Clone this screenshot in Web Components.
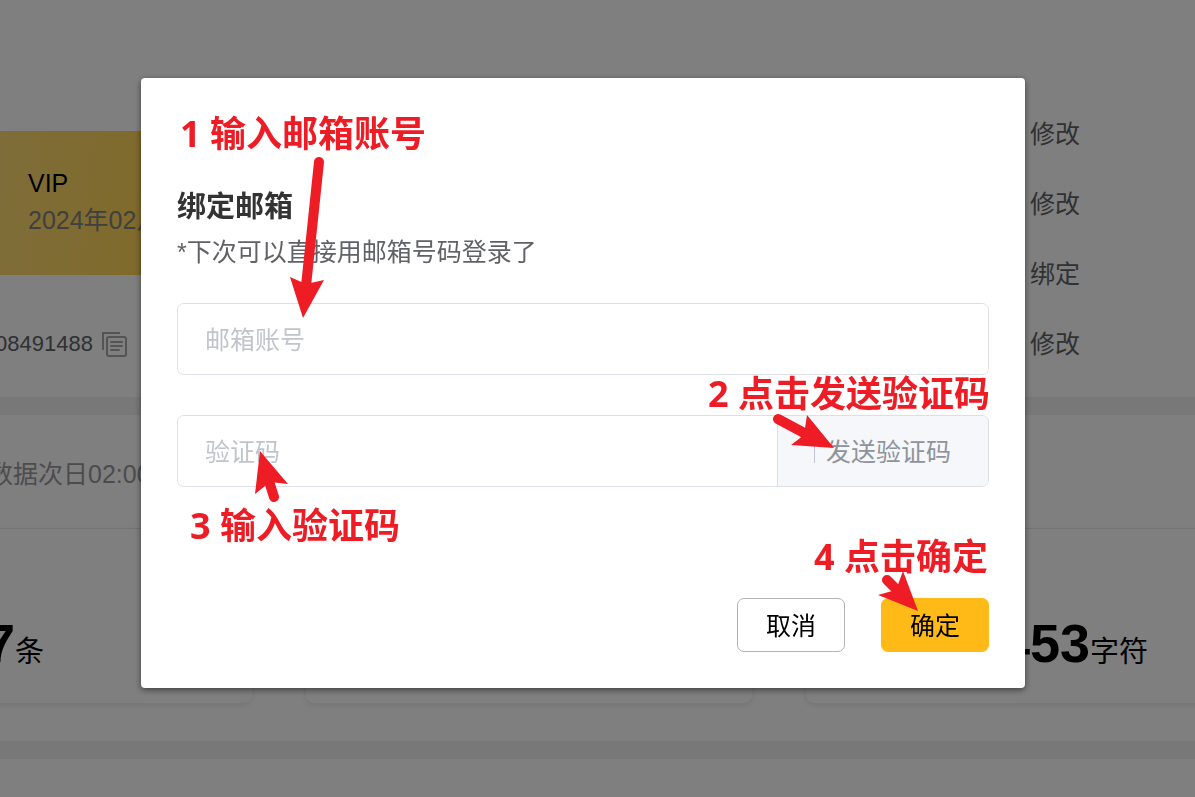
<!DOCTYPE html>
<html lang="zh-CN">
<head>
<meta charset="utf-8">
<title>绑定邮箱</title>
<style>
html, body { height: 100%; margin: 0; }
body {
  font-family: "Liberation Sans", "Noto Sans CJK SC", sans-serif;
  font-size: 25px;
  color: #606266;
  background: #fff;
  overflow: hidden;
}
</style>
</head>
<body>
<account-page></account-page>
<modal-overlay>
  <bind-email-dialog></bind-email-dialog>
</modal-overlay>
<guide-layer></guide-layer>

<script>
function define(name, html) {
  const template = document.createElement('template');
  template.innerHTML = html;
  customElements.define(name, class extends HTMLElement {
    constructor() {
      super();
      this.attachShadow({ mode: 'open' }).append(template.content.cloneNode(true));
    }
  });
}

define('vip-card', `
<style>
:host { display: flex; flex-direction: column; justify-content: center; box-sizing: border-box; height: 144px; width: 640px; padding: 0 0 2px 276px; line-height: 37px;
  background: linear-gradient(95deg, #ffdc78 35%, #ffd65a 58%, #ffd048 100%); color: #808080; }
b { font-weight: 400; color: #000; }
</style>
<b>VIP</b><span><slot></slot></span>`);

define('copy-button', `
<style>
:host { display: inline-flex; }
button { display: flex; padding: 0; border: 0; background: none; color: #a8a8a8; }
</style>
<button type="button" aria-label="复制">
<svg width="25" height="25" viewBox="0 0 25 25" fill="none" stroke="currentColor" stroke-width="2">
<path d="M1 18V1h17"/><rect x="5" y="5" width="19" height="19" rx="2"/>
<path d="M9 10h11M9 14h11M9 18h8" stroke-linecap="round"/></svg>
</button>`);

define('action-list', `
<style>
:host { display: flex; flex-direction: column; line-height: 30px; gap: 40px; }
a { color: inherit; text-decoration: none; }
</style>
<a href="#name">修改</a><a href="#password">修改</a><a href="#email">绑定</a><a href="#phone">修改</a>`);

define('stat-card', `
<style>
:host { display: flex; align-items: flex-end; box-sizing: border-box; height: 174px; padding: 0 0 22px var(--inset, 179px);
  border-radius: 0 0 8px 8px; box-shadow: 0 2px 6px rgba(0,0,0,.1); color: #000; font-size: 29px; white-space: nowrap; }
p { margin: 0; line-height: 58px; }
strong { font-size: 54px; }
</style>
<p><strong><slot name="value"></slot></strong><slot></slot></p>`);

define('account-page', `
<style>
:host { display: block; height: 100%; overflow: hidden; background: #f0f0f0; }
main { display: flex; flex-direction: column; gap: 18px; margin: 0 -111px 0 -248px; min-height: 100%; }
section { background: #fff; }
.profile { display: flex; justify-content: space-between; box-sizing: border-box; height: 397px; }
.left { padding-top: 131px; }
.id { display: flex; align-items: center; gap: 9px; padding: 56px 0 0 243px; font-size: 22px; line-height: 26px; }
action-list { padding: 119px 226px 0 0; }
.stats { height: 326px; }
header { box-sizing: border-box; height: 114px; padding: 41px 0 0 236px; line-height: 36px; color: #999; border-bottom: 1px solid #ebebeb; }
.cards { display: grid; grid-template-columns: repeat(3, 1fr); gap: 54px; padding: 0 54px; }
.last { --inset: 194px; }
.more { flex: 1; }
</style>
<main>
  <section class="profile">
    <div class="left">
      <vip-card>2024年02月</vip-card>
      <div class="id"><span>08491488</span><copy-button></copy-button></div>
    </div>
    <action-list></action-list>
  </section>
  <section class="stats">
    <header>数据次日02:00</header>
    <div class="cards">
      <stat-card><span slot="value">7</span>条</stat-card>
      <stat-card></stat-card>
      <stat-card class="last"><span slot="value">453</span>字符</stat-card>
    </div>
  </section>
  <section class="more"></section>
</main>`);

define('modal-overlay', `
<style>
:host { position: fixed; inset: 0; display: flex; justify-content: center; align-items: flex-start; padding: 78px 29px 0 0; background: rgba(0,0,0,.5); }
</style>
<slot></slot>`);

define('text-field', `
<style>
:host { display: flex; height: 72px; box-sizing: border-box; border: 1px solid #dcdfe6; border-radius: 7px; overflow: hidden; }
label { display: flex; flex: 1; }
input { flex: 1; min-width: 0; padding: 2px 27px 0; border: 0; outline: 0; background: #fff; font: inherit; color: #606266; }
input::placeholder { color: #c0c4cc; opacity: 1; }
</style>
<label><input type="text"></label><slot></slot>`);
customElements.define('labelled-field', class extends customElements.get('text-field') {
  constructor() {
    super();
    const input = this.shadowRoot.querySelector('input');
    input.placeholder = this.getAttribute('label') || '';
    input.setAttribute('aria-label', input.placeholder);
  }
});

define('send-code', `
<style>
:host { display: flex; }
button { display: flex; align-items: center; gap: 11px; padding: 0 37px 3px 36px; border: 0; border-left: 1px solid #dcdfe6; background: #f5f7fa; color: #909399; font: inherit; }
i { width: 1px; height: 27px; background: #c0c4cc; }
</style>
<button type="button"><i></i>发送验证码</button>`);

define('action-button', `
<style>
:host { display: block; }
button { width: 108px; height: 54px; padding: 0 0 2px; border: 1px solid #b3b3b3; border-radius: 7px; background: #fff; color: #000; font: inherit; }
:host([primary]) button { border-color: #ffba17; background: #ffba17; }
</style>
<button type="button"><slot></slot></button>`);

define('bind-email-dialog', `
<style>
:host { display: block; box-sizing: border-box; width: 884px; max-width: 100%; height: 610px; padding: 109px 36px 36px; border-radius: 4px; background: #fff; box-shadow: 0 2px 6px rgba(0,0,0,.5); }
h2 { margin: 0; font-size: 29px; line-height: 40px; color: #333; }
p { margin: 6px 0 31px; line-height: 39px; }
form { display: flex; flex-direction: column; gap: 40px; }
footer { display: flex; justify-content: flex-end; gap: 36px; margin-top: 71px; }
</style>
<h2>绑定邮箱</h2>
<p>*下次可以直接用邮箱号码登录了</p>
<form>
  <labelled-field label="邮箱账号"></labelled-field>
  <labelled-field label="验证码"><send-code></send-code></labelled-field>
  <footer><action-button>取消</action-button><action-button primary>确定</action-button></footer>
</form>`);

define('guide-layer', `
<style>
:host { position: fixed; inset: 0; display: flex; justify-content: center; align-items: flex-start; padding: 78px 29px 0 0; pointer-events: none; color: #ee1c25; font: bold 36px/48px "Open Sans", "Noto Sans CJK SC", sans-serif; }
div { position: relative; width: 884px; height: 610px; }
svg { position: absolute; inset: 0; overflow: visible; fill: currentColor; stroke: currentColor; }
span { position: absolute; white-space: nowrap; }
.one { left: 39px; top: 32px; }
.two { right: 35px; top: 292px; }
.three { left: 49px; top: 424px; }
.four { right: 37px; top: 455px; }
</style>
<div>
  <svg width="884" height="610" viewBox="141 78 884 610" aria-hidden="true">
    <g stroke-width="10" stroke-linecap="round"><path d="M319 162L306 286M778 419L806 434M274 497L268 478M887 580L900 593"/></g>
    <g stroke="none">
      <path d="M303 318L290 277L306 284L324 280Z"/>
      <path d="M834 448L791 445L804 435L807 415Z"/>
      <path d="M260 451L288 484L270 482L255 494Z"/>
      <path d="M918 611L878 595L896 590L903 571Z"/>
    </g>
  </svg>
  <span class="one">1 输入邮箱账号</span>
  <span class="two">2 点击发送验证码</span>
  <span class="three">3 输入验证码</span>
  <span class="four">4 点击确定</span>
</div>`);
</script>
</body>
</html>
